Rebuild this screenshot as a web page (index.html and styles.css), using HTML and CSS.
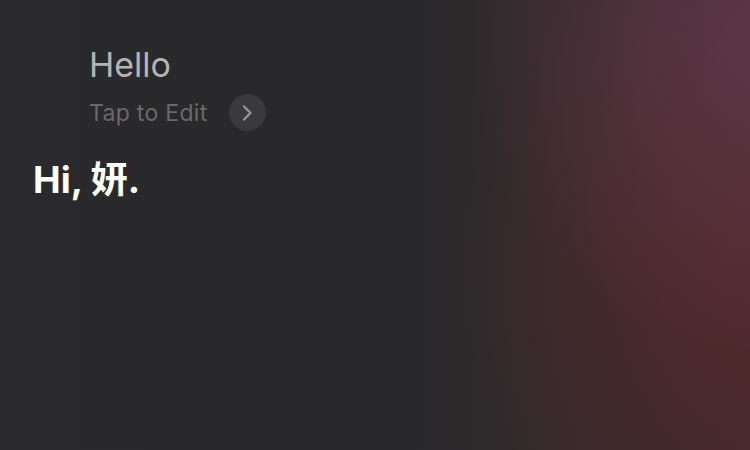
FILE: index.html
```html
<!DOCTYPE html>
<html lang="en">
<head>
    <meta charset="UTF-8">
    <meta name="viewport" content="width=device-width, initial-scale=1.0">
    <title>Siri</title>
    <link rel="stylesheet" href="styles.css">
</head>
<body>
    <div class="siri-screen">
        <div class="query">
            <div class="query-text">Hello</div>
            <div class="edit-row">
                <span class="edit-label">Tap to Edit</span>
                <span class="edit-btn">
                    <svg width="14" height="18" viewBox="0 0 14 18">
                        <path d="M4 2.5 L10.5 9 L4 15.5" fill="none" stroke="#98989a" stroke-width="2.2" stroke-linecap="round" stroke-linejoin="round"/>
                    </svg>
                </span>
            </div>
        </div>
        <div class="answer">Hi, 妍.</div>
    </div>
</body>
</html>
```

FILE: styles.css
```css
body {
    margin: 0;
    padding: 0;
    width: 750px;
    height: 450px;
    overflow: hidden;
    font-family: Inter, "Noto Sans CJK SC", sans-serif;
    background-color: #28282a;
}

.siri-screen {
    height: 450px;
    box-sizing: border-box;
    padding: 41px 0 0 33px;
    display: flex;
    flex-direction: column;
    background:
        radial-gradient(ellipse 300px 320px at 770px 40px, rgba(100, 58, 78, 0.8), rgba(100, 58, 78, 0) 100%),
        radial-gradient(ellipse 300px 340px at 760px 270px, rgba(88, 40, 42, 0.8), rgba(88, 40, 42, 0) 100%),
        linear-gradient(90deg, #2a2a2c 0%, #29292b 55%, #302a2c 68%, #382a2d 82%, #3e2a2d 100%);
}

.query {
    padding-left: 56px;
}

.query-text {
    font-size: 34px;
    font-weight: 400;
    color: #b4b4b6;
    line-height: 48px;
}

.edit-row {
    display: flex;
    align-items: center;
    gap: 21px;
    margin-top: 5px;
}

.edit-label {
    font-size: 23px;
    color: #69696b;
    letter-spacing: 0.3px;
}

.edit-btn {
    width: 37px;
    height: 37px;
    border-radius: 50%;
    background-color: #3a3a3c;
    display: flex;
    align-items: center;
    justify-content: center;
}

.answer {
    margin-top: 27px;
    font-size: 37px;
    font-weight: bold;
    color: #ffffff;
    line-height: 44px;
}
```
